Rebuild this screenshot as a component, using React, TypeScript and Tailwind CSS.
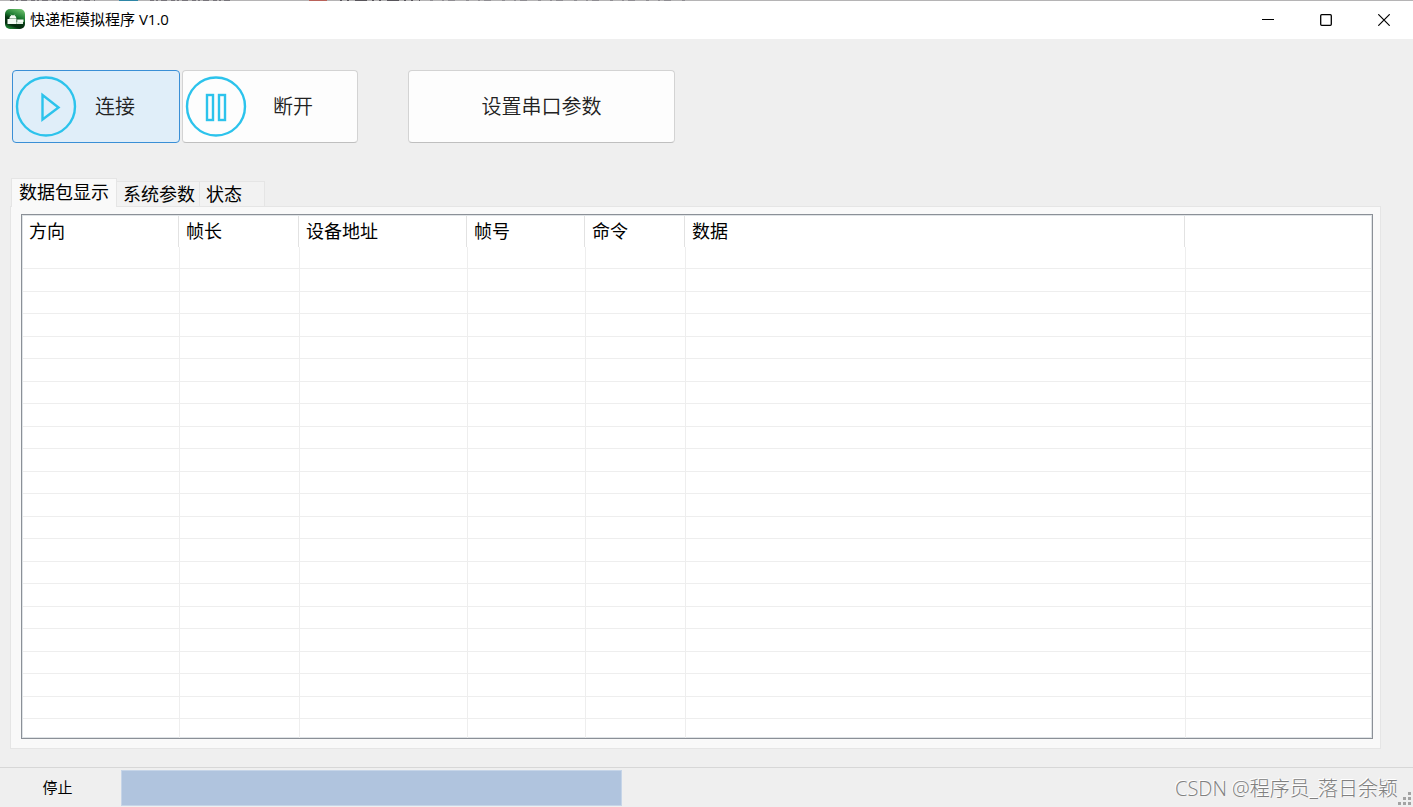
import { useState } from 'react';
import clsx from 'clsx';

const tabs = [
  { id: 'packets', label: '数据包显示', width: 'w-[106px]' },
  { id: 'system', label: '系统参数', width: 'w-[83px]' },
  { id: 'status', label: '状态', width: 'w-[65px]' },
];

const columns = [
  { label: '方向', width: 'w-[157px]' },
  { label: '帧长', width: 'w-[120px]' },
  { label: '设备地址', width: 'w-[168px]' },
  { label: '帧号', width: 'w-[118px]' },
  { label: '命令', width: 'w-[100px]' },
  { label: '数据', width: 'w-[500px]' },
  { label: '', width: '' },
];

const emptyRows = Array.from({ length: 21 }, (_, i) => i);

function AppIcon() {
  return (
    <svg width="20" height="20" viewBox="0 0 20 20" aria-hidden="true">
      <defs>
        <linearGradient id="app-icon" x1="0.8" y1="0" x2="0.4" y2="1">
          <stop offset="0" stopColor="#6cc06c" />
          <stop offset="0.4" stopColor="#1c7a30" />
          <stop offset="0.6" stopColor="#053511" />
          <stop offset="0.85" stopColor="#042a0d" />
          <stop offset="1" stopColor="#1b7a2e" />
        </linearGradient>
      </defs>
      <rect width="20" height="20" rx="5" fill="url(#app-icon)" />
      <path d="M4.500 9.500C4.500 8 5.300 7 6.300 6.600L5.300 5.200L6.900 6.200H8.900L10.500 5.200L9.500 6.600C10.500 7 11.300 8 11.300 9.500Z" fill="#f4fbf4" />
      <path d="M2.500 10H4V9.700H11.500V15H2.500ZM12.200 10.500H18.500V13H12.200Z" fill="#f4fbf4" />
      <path d="M11.500 13H18V15H11.500Z" fill="#dfeee0" />
    </svg>
  );
}

function PlayIcon() {
  return (
    <svg width="62" height="62" viewBox="0 0 62 62" fill="none" stroke="#2cc3ec" strokeWidth="2.4" aria-hidden="true">
      <circle cx="31" cy="30.500" r="29" />
      <path d="M27.500 19V43.500L43.500 31.500Z" />
    </svg>
  );
}

function PauseIcon() {
  return (
    <svg width="62" height="62" viewBox="0 0 62 62" fill="none" stroke="#2cc3ec" strokeWidth="2.4" aria-hidden="true">
      <circle cx="31" cy="30.500" r="29" />
      <rect x="22" y="19" width="6" height="25" />
      <rect x="34" y="19" width="6" height="25" />
    </svg>
  );
}

// Sliver of the window behind, visible above the title bar
function BackdropEdge() {
  return (
    <svg className="block h-px w-full bg-[#b5b4b5]" aria-hidden="true">
      <path d="M119 0.500H138" stroke="#2e86a6" />
      <path d="M309 0.500H327" stroke="#b9625a" />
      <path d="M10 0.500H95M150 0.500H232" stroke="#77747a" strokeDasharray="4 2 2 3 6 4" />
      <path d="M340 0.500H420" stroke="#57545a" strokeDasharray="2 5 2 6 12 5" />
      <path d="M430 0.500H690" stroke="#8f8d92" strokeDasharray="3 9 2 4 7 11" />
    </svg>
  );
}

function TitleBar() {
  const control = 'flex w-[58px] items-center justify-center hover:bg-gray-200';
  return (
    <header className="h-[39px] bg-white">
      <BackdropEdge />
      <div className="flex h-[38px] justify-between">
        <div className="flex items-center gap-[5px] pb-[2px] pl-[5px]">
          <AppIcon />
          <h1 className="text-[15px] leading-5 text-black">快递柜模拟程序 V1.0</h1>
        </div>
        <div className="flex text-black">
          <button type="button" aria-label="最小化" className={control}>
            <svg width="12" height="12" viewBox="0 0 12 12" fill="none" stroke="currentColor">
              <path d="M0 5.500H12" />
            </svg>
          </button>
          <button type="button" aria-label="最大化" className={control}>
            <svg width="12" height="12" viewBox="0 0 12 12" fill="none" stroke="currentColor" strokeWidth="1.3">
              <rect x="0.700" y="0.700" width="10.600" height="10.600" rx="1" />
            </svg>
          </button>
          <button type="button" aria-label="关闭" className={control}>
            <svg width="12" height="12" viewBox="0 0 12 12" fill="none" stroke="currentColor" strokeWidth="1.2">
              <path d="M0.300 0.300L11.700 11.700M11.700 0.300L0.300 11.700" />
            </svg>
          </button>
        </div>
      </div>
    </header>
  );
}

function Toolbar() {
  const base = 'flex h-[73px] items-center rounded-[4px] border text-[20px] leading-6 font-[350] text-[#222]';
  const plain = 'border-[#d3d3d3] border-b-[#bfbfbf] bg-[#fdfdfd]';
  return (
    <div className="flex pt-[31px] pl-3">
      <button type="button" className={clsx(base, 'w-[168px] gap-[18px] border-[#3a8fd6] bg-[#e0eef9] pl-[2px]')}>
        <PlayIcon />
        连接
      </button>
      <button type="button" className={clsx(base, plain, 'ml-[2px] w-[176px] gap-[26px] pl-[2px]')}>
        <PauseIcon />
        断开
      </button>
      <button type="button" className={clsx(base, plain, 'ml-[50px] w-[267px] justify-center')}>
        设置串口参数
      </button>
    </div>
  );
}

function PacketTable() {
  return (
    <div className="border border-[#8b9097] bg-white px-px shadow-[inset_0_0_0_1px_#dfe3e6]">
      <table className="w-full table-fixed border-separate border-spacing-0 text-[18px] leading-6 text-black">
        <thead>
          <tr className="h-8">
            {columns.map((col, i) => (
              <th key={i} scope="col" className={clsx(col.width, 'p-0 pt-px text-left align-top font-normal')}>
                <div className={clsx('mr-px h-[31px] pt-[3px] pl-[6px]', col.label && 'border-r border-[#e2e2e2]')}>
                  {col.label}
                </div>
              </th>
            ))}
          </tr>
        </thead>
        <tbody>
          {emptyRows.map((row) => (
            <tr key={row} className="odd:h-[22px] even:h-[23px]">
              {columns.map((col, i) => (
                <td key={i} className={clsx('border-b border-[#eeeeee] p-0', col.label && 'border-r')} />
              ))}
            </tr>
          ))}
          <tr className="h-[19px]">
            {columns.map((col, i) => (
              <td key={i} className={clsx('border-[#eeeeee] p-0', col.label && 'border-r')} />
            ))}
          </tr>
        </tbody>
      </table>
    </div>
  );
}

function StatusBar() {
  return (
    <footer className="flex h-10 justify-between border-t border-[#d7d7d7]">
      <div className="flex flex-1 items-center">
        <span className="w-[121px] pr-[6px] pb-px text-center text-[15px] leading-5 text-black">停止</span>
        <div className="mt-px h-9 w-[501px] border border-[#c6d5e8] bg-[#b0c4de]" />
      </div>
      <div className="flex items-center">
        <span className="pt-[2px] text-[20px] leading-6 font-light text-[#808080] [text-shadow:-1px_-1px_0_#fff]">
          CSDN @程序员_落日余颖
        </span>
        <svg className="self-end" width="15" height="16" viewBox="0 0 15 16" fill="#a3a3a3" aria-hidden="true">
          <path d="M10 1h3v3h-3zM5 6h3v3h-3zM10 6h3v3h-3zM0 11h3v3h-3zM5 11h3v3h-3zM10 11h3v3h-3z" />
        </svg>
      </div>
    </footer>
  );
}

export default function App() {
  const [active, setActive] = useState('packets');

  return (
    <div className="flex min-h-screen flex-col bg-[#efefef] font-['Open_Sans','Noto_Sans_CJK_SC',sans-serif]">
      <TitleBar />
      <main className="flex-1">
        <Toolbar />
        <section className="mr-8 ml-[10px] pt-[35px] pb-[18px]">
          <div role="tablist" className="flex items-end pl-px">
            {tabs.map((tab) => (
              <button
                key={tab.id}
                type="button"
                role="tab"
                aria-selected={active === tab.id}
                onClick={() => setActive(tab.id)}
                className={clsx(
                  tab.width,
                  'border-t border-r border-[#e5e5e5] text-left text-[18px] leading-6 text-black',
                  active === tab.id ? '-mb-px h-[29px] border-l bg-[#f9f9f9] pb-[3px] pl-[7px]' : 'h-[25px] bg-[#f2f2f2] pl-[6px]',
                )}
              >
                {tab.label}
              </button>
            ))}
          </div>
          <div className="border border-[#e5e5e5] bg-[#f9f9f9] pt-[7px] pr-[7px] pb-[9px] pl-[10px]">
            <PacketTable />
          </div>
        </section>
      </main>
      <StatusBar />
    </div>
  );
}
